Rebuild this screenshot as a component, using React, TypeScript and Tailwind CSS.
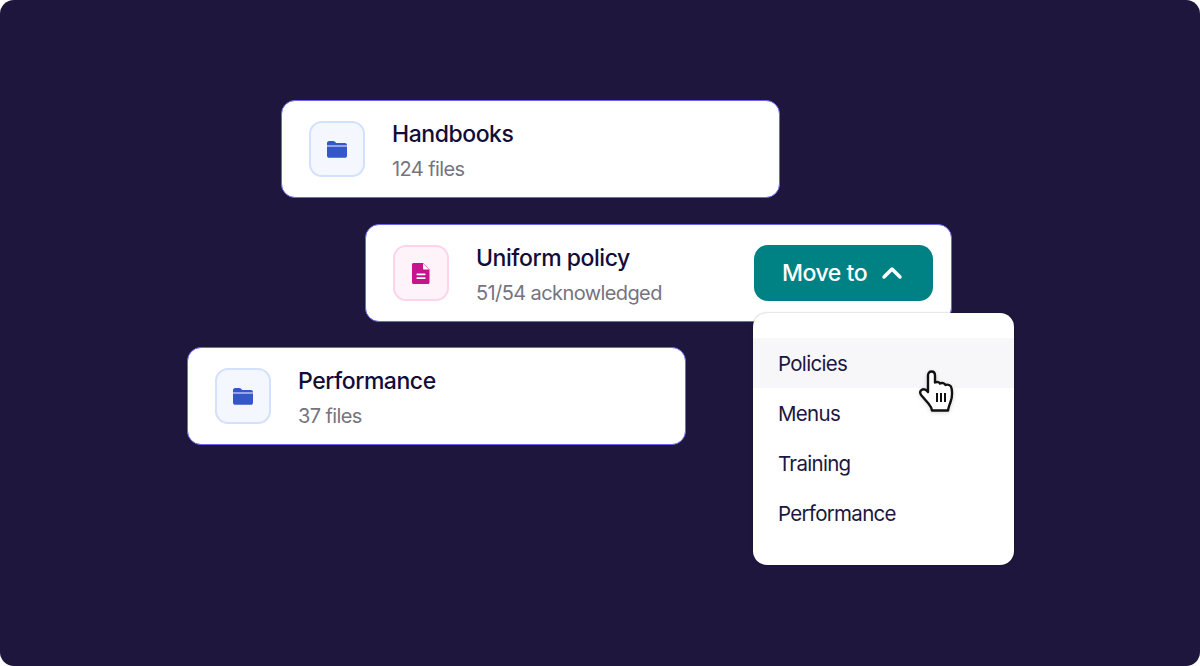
import { ChevronUp } from "lucide-react";

const font = "font-['Inter',sans-serif]";

function FolderIcon() {
  return (
    <svg width="20" height="17" viewBox="0 0 20 17" fill="#3558c8">
      <path d="M0 2.2C0 1 .9 0 2.1 0h4.2c.6 0 1.1.2 1.5.6L9.2 2h8.7C19 2 20 2.9 20 4v.4H0V2.2Z" />
      <path d="M0 5.4h20v9.3c0 1.2-.9 2.1-2.1 2.1H2.1C.9 16.8 0 15.9 0 14.7V5.4Z" />
    </svg>
  );
}

function DocIcon() {
  return (
    <svg width="18" height="21" viewBox="0 0 18 21">
      <path
        fill="#c7148c"
        d="M1.5 0H11l6.5 6.5V19.5c0 .8-.7 1.5-1.5 1.5H1.5C.7 21 0 20.3 0 19.5V1.5C0 .7.7 0 1.5 0Z"
      />
      <path fill="#fff" d="M11 0.6 17 6.5H11.8c-.4 0-.8-.4-.8-.8V.6Z" />
      <rect x="4.5" y="10.5" width="9" height="1.7" rx=".4" fill="#fff" />
      <rect x="4.5" y="14.3" width="9" height="1.7" rx=".4" fill="#fff" />
    </svg>
  );
}

function HandCursor() {
  return (
    <svg width="36" height="44" viewBox="0 0 36 44" className="drop-shadow-sm">
      <path
        d="M9 5.5C9 3 10.5 1.5 12.5 1.5S16 3 16 5.5V12.500C18 11.500 20.500 12 21 13.500C23 12.500 25.500 13 26.500 15C28.500 14 32 15 32.500 18C33.500 23 33 28 31.500 32C30.500 35 29.500 37 29 40.500H13C12.500 37 11 35.500 9 33L2.500 25.500C.5 23 1 21 2.500 20C4.500 18.500 7 19.500 9 22Z"
        fill="#fff"
        stroke="#111"
        strokeWidth="2.400"
        strokeLinejoin="round"
      />
      <path d="M18 23v9M22 23v9M26 23v9" stroke="#111" strokeWidth="2" fill="none" />
    </svg>
  );
}

function Card({
  title,
  sub,
  icon,
  tile,
  className,
  children,
}: {
  title: string;
  sub: string;
  icon: React.ReactNode;
  tile: string;
  className: string;
  children?: React.ReactNode;
}) {
  return (
    <div
      className={`flex h-[98px] items-center rounded-[14px] border border-[#6a66e8] bg-white pl-[27px] ${className}`}
    >
      <div
        className={`flex h-[56px] w-[56px] shrink-0 items-center justify-center rounded-[13px] border-2 ${tile}`}
      >
        {icon}
      </div>
      <div className="ml-[27px] flex-1 pt-[2px]">
        <div className="text-[23px] leading-[32px] font-medium tracking-[-0.45px] text-[#120d38]">{title}</div>
        <div className="mt-[5px] text-[20px] leading-[28px] tracking-[-0.6px] text-[#74747f]">{sub}</div>
      </div>
      {children}
    </div>
  );
}

const items = ["Policies", "Menus", "Training", "Performance"];

export default function App() {
  return (
    <div className={`h-[666px] w-[1200px] overflow-hidden bg-white ${font}`}>
      <div className="relative flex h-full flex-col gap-[26px] rounded-[14px] bg-[#1e163d] pt-[100px]">
        <Card
          title="Handbooks"
          sub="124 files"
          icon={<FolderIcon />}
          tile="border-[#d3e1fc] bg-[#f5f7ff]"
          className="ml-[281px] w-[499px]"
        />
        <Card
          title="Uniform policy"
          sub="51/54 acknowledged"
          icon={<DocIcon />}
          tile="border-[#fdd4ea] bg-[#fff3fa]"
          className="ml-[365px] w-[587px] pr-[18px]"
        >
          <button className="flex h-[56px] w-[179px] items-center justify-start gap-[9px] rounded-[14px] bg-[#008285] pl-[28px] text-[23px] font-medium tracking-[-0.45px] text-white">
            Move to
            <ChevronUp size={32} strokeWidth={2.6} />
          </button>
        </Card>
        <Card
          title="Performance"
          sub="37 files"
          icon={<FolderIcon />}
          tile="border-[#d3e1fc] bg-[#f5f7ff]"
          className="ml-[187px] w-[499px] -mt-[1px]"
        />

        <div className="absolute top-[313px] left-[753px] w-[261px] rounded-[14px] bg-white pt-[25px] pb-[27px] shadow-[0_0_2px_rgba(0,0,0,0.35)]">
          {items.map((item, i) => (
            <div
              key={item}
              className={`flex h-[50px] items-center pt-[3px] pl-[25px] text-[20.5px] tracking-[-0.7px] text-[#1b1740] ${i === 0 ? "bg-[#f7f7fa]" : ""}`}
            >
              {item}
            </div>
          ))}
        </div>
        <div className="absolute top-[370px] left-[919px]">
          <HandCursor />
        </div>
      </div>
    </div>
  );
}
